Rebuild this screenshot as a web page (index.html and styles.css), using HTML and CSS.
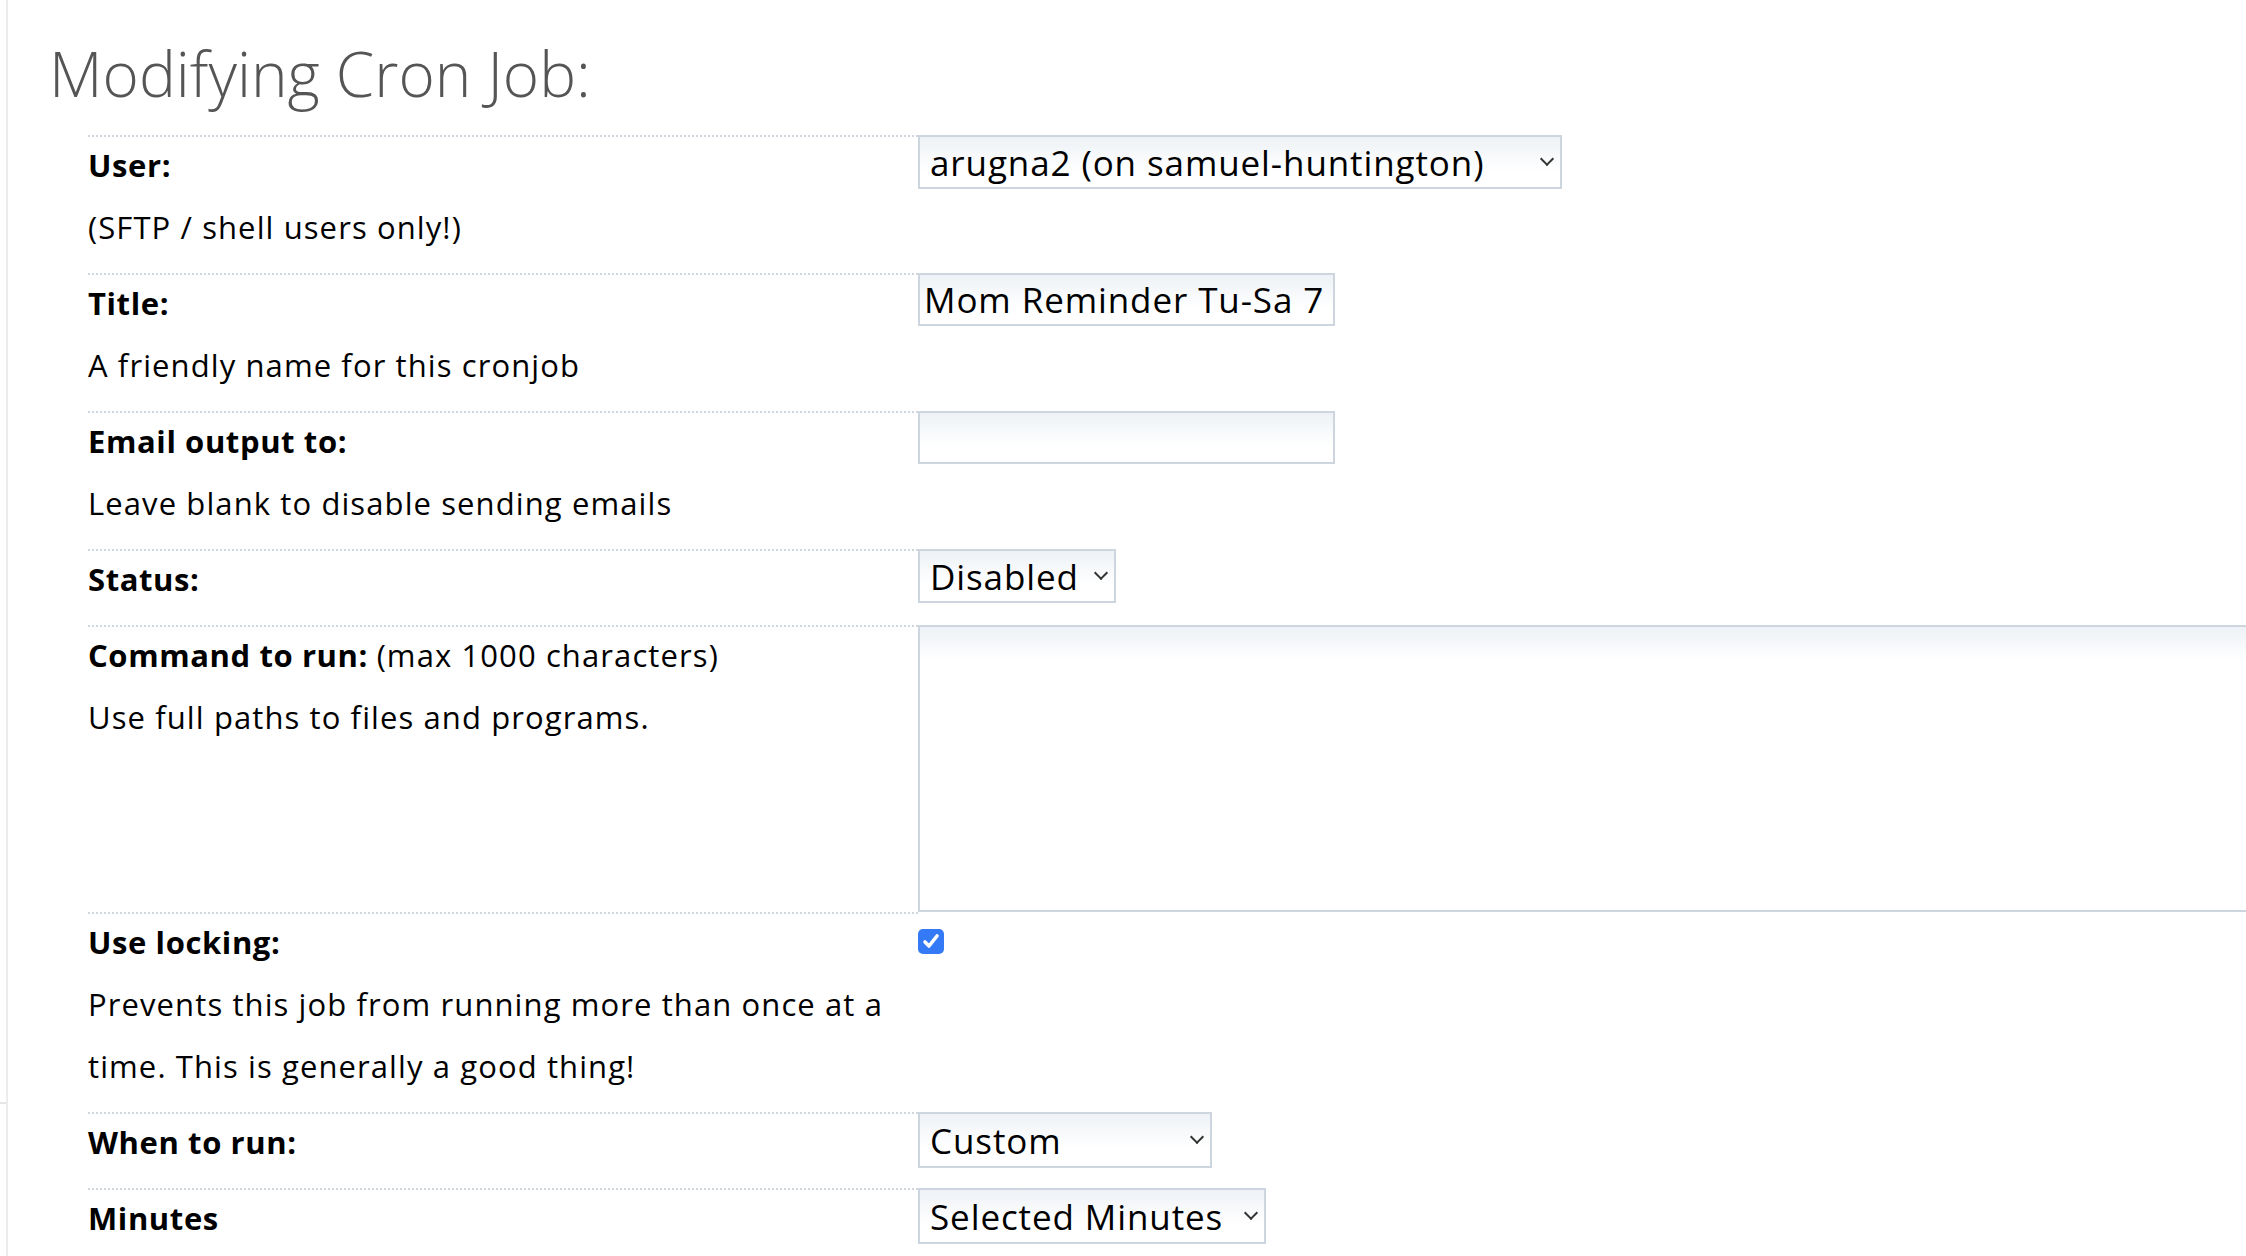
FILE: index.html
```html
<!DOCTYPE html>
<html lang="en">
<head>
<meta charset="utf-8">
<title>Modifying Cron Job</title>
<link rel="stylesheet" href="styles.css">
</head>
<body>
<div class="page">
  <div class="sidebar"><span class="tick"></span></div>
  <main class="main">
    <h1 class="heading">Modifying Cron Job:</h1>
    <form class="form">
      <div class="row">
        <div class="label-cell">
          <div class="label">User:</div>
          <div class="desc">(SFTP / shell users only!)</div>
        </div>
        <div class="field-cell">
          <span class="select-wrap sel-user">
            <select class="select"><option>arugna2 (on samuel-huntington)</option></select>
          </span>
        </div>
      </div>
      <div class="row">
        <div class="label-cell">
          <div class="label">Title:</div>
          <div class="desc">A friendly name for this cronjob</div>
        </div>
        <div class="field-cell">
          <input class="text-input" type="text" value="Mom Reminder Tu-Sa 7">
        </div>
      </div>
      <div class="row">
        <div class="label-cell">
          <div class="label">Email output to:</div>
          <div class="desc">Leave blank to disable sending emails</div>
        </div>
        <div class="field-cell">
          <input class="text-input" type="text" value="">
        </div>
      </div>
      <div class="row">
        <div class="label-cell">
          <div class="label">Status:</div>
        </div>
        <div class="field-cell">
          <span class="select-wrap sel-status">
            <select class="select"><option>Disabled</option><option>Enabled</option></select>
          </span>
        </div>
      </div>
      <div class="row">
        <div class="label-cell">
          <div class="label">Command to run: <span class="normal">(max 1000 characters)</span></div>
          <div class="desc">Use full paths to files and programs.</div>
        </div>
        <div class="field-cell">
          <textarea class="textarea"></textarea>
        </div>
      </div>
      <div class="row">
        <div class="label-cell">
          <div class="label">Use locking:</div>
          <div class="desc">Prevents this job from running more than once at a time. This is generally a good thing!</div>
        </div>
        <div class="field-cell">
          <span class="checkbox">
            <svg width="26" height="25" viewBox="0 0 26 25"><path d="M7 13 L11 17 L19 7" fill="none" stroke="#fff" stroke-width="3.6" stroke-linecap="round" stroke-linejoin="round"/></svg>
          </span>
        </div>
      </div>
      <div class="row">
        <div class="label-cell">
          <div class="label">When to run:</div>
        </div>
        <div class="field-cell">
          <span class="select-wrap sel-when">
            <select class="select"><option>Custom</option><option>Every minute</option></select>
          </span>
        </div>
      </div>
      <div class="row">
        <div class="label-cell">
          <div class="label">Minutes</div>
        </div>
        <div class="field-cell">
          <span class="select-wrap sel-minutes">
            <select class="select"><option>Selected Minutes</option><option>Every Minute</option></select>
          </span>
        </div>
      </div>
    </form>
  </main>
</div>
</body>
</html>
```

FILE: styles.css
```css
html, body {
  margin: 0;
  padding: 0;
  background: #fff;
  overflow: hidden;
}

body {
  font-family: "Open Sans", "Liberation Sans", sans-serif;
  color: #000;
}

.page {
  display: flex;
  min-height: 1256px;
}

.sidebar {
  position: relative;
  width: 6px;
  flex: 0 0 6px;
  border-right: 2px solid #ececec;
}

.tick {
  position: absolute;
  left: 0;
  top: 1102px;
  width: 6px;
  height: 2px;
  background: #e6e6e6;
}

.main {
  flex: 1;
  padding-left: 41px;
}

.heading {
  font-family: "Open Sans", sans-serif;
  font-weight: 300;
  font-size: 62px;
  line-height: 80px;
  color: #555;
  margin: 33px 0 0 0;
  height: 102px;
}

.form {
  margin-left: 39px;
}

.row {
  display: grid;
  grid-template-columns: 830px 1fr;
}

.label-cell {
  border-top: 2px dotted #cfd6dd;
  padding: 0 0 15px 0;
  font-size: 31px;
  line-height: 62px;
  letter-spacing: 1.1px;
}

.label {
  font-weight: 700;
  margin-top: -3px;
  letter-spacing: 0.6px;
}

.label .normal {
  font-weight: 400;
  letter-spacing: 1.1px;
}

.field-cell {
  min-width: 0;
}

.text-input,
.select,
.textarea {
  box-sizing: border-box;
  border: 2px solid #cdd6df;
  border-radius: 0;
  background: linear-gradient(to bottom, #eef2f6 0, #ffffff 34px);
  font-family: "Open Sans", "Liberation Sans", sans-serif;
  font-size: 35px;
  letter-spacing: 0.9px;
  color: #000;
  margin: 0;
  outline: none;
}

.text-input {
  display: block;
  width: 417px;
  height: 53px;
  padding: 0 4px;
}

.select-wrap {
  position: relative;
  display: inline-block;
  vertical-align: top;
}

.select {
  -webkit-appearance: none;
  appearance: none;
  display: block;
  width: 100%;
  height: 54px;
  padding: 0 30px 0 10px;
}

.select-wrap::after {
  content: "";
  position: absolute;
  right: 10px;
  top: 19px;
  width: 8px;
  height: 8px;
  border-right: 2px solid #333;
  border-bottom: 2px solid #333;
  transform: rotate(45deg);
  pointer-events: none;
}

.sel-user { width: 644px; }
.sel-status { width: 198px; }
.sel-when { width: 294px; }
.sel-minutes { width: 348px; }

.sel-when .select,
.sel-minutes .select {
  height: 56px;
}

.sel-when::after,
.sel-minutes::after {
  top: 20px;
}

.textarea {
  display: block;
  width: 1400px;
  height: 287px;
  resize: none;
}

.checkbox {
  display: block;
  width: 26px;
  height: 25px;
  margin-top: 17px;
  background: #3479f6;
  border-radius: 5px;
}

.checkbox svg {
  display: block;
}
```
